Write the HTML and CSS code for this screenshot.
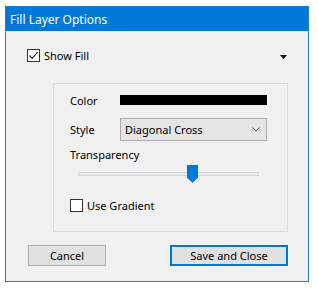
FILE: index.html
```html
<!DOCTYPE html>
<html>
<head>
<meta charset="utf-8">
<link rel="stylesheet" href="styles.css">
</head>
<body>
<div class="window">
  <div class="titlebar">Fill Layer Options</div>
  <div class="content">
    <div class="top-row">
      <label class="check">
        <span class="box checked">
          <svg width="11" height="11" viewBox="0 0 11 11"><path d="M1.5 5.5 L4.2 8.3 L9.6 2.2" fill="none" stroke="#222" stroke-width="1.2"/></svg>
        </span>
        <span>Show Fill</span>
      </label>
      <svg class="menu-arrow" width="7" height="4" viewBox="0 0 7 4"><path d="M0 0 H7 L3.5 4 Z" fill="#111"/></svg>
    </div>
    <div class="group">
      <div class="field">
        <span class="label">Color</span>
        <span class="color-bar"></span>
      </div>
      <div class="field style-row">
        <span class="label">Style</span>
        <div class="select">
          <span>Diagonal Cross</span>
          <svg width="8" height="5" viewBox="0 0 8 5"><path d="M0.5 0.5 L4 4 L7.5 0.5" fill="none" stroke="#555" stroke-width="1"/></svg>
        </div>
      </div>
      <div class="label trans-label">Transparency</div>
      <div class="slider">
        <div class="track"></div>
        <svg class="thumb" width="11" height="18" viewBox="0 0 11 18"><path d="M0 0 H11 V12.5 L5.5 18 L0 12.5 Z" fill="#0078d7"/></svg>
      </div>
      <label class="check gradient">
        <span class="box"></span>
        <span>Use Gradient</span>
      </label>
    </div>
    <div class="buttons">
      <button class="btn cancel">Cancel</button>
      <button class="btn primary">Save and Close</button>
    </div>
  </div>
</div>
</body>
</html>
```

FILE: styles.css
```css
* { box-sizing: border-box; }
body {
  margin: 0;
  background: #ffffff;
  font-family: "Noto Sans", "Open Sans", sans-serif;
  font-size: 11px;
  color: #000;
}
.window {
  margin: 6px 0 0 5px;
  width: 304px;
  height: 276px;
  border: 1px solid #1a7fd4;
  background: #f0f0f0;
  display: flex;
  flex-direction: column;
}
.titlebar {
  height: 24px;
  background: #0078d7;
  color: #fff;
  font-size: 12px;
  padding-left: 4px;
  display: flex;
  align-items: center;
}
.content {
  padding: 0 20px 0 21px;
}
.top-row {
  margin-top: 15px;
  height: 18px;
  display: flex;
  align-items: center;
  justify-content: space-between;
}
.menu-arrow { margin-right: 1px; margin-top: 4px; }
.check {
  display: flex;
  align-items: center;
  gap: 4px;
}
.box {
  width: 13px;
  height: 13px;
  border: 1px solid #333;
  background: #fff;
  display: flex;
  align-items: center;
  justify-content: center;
}
.group {
  margin: 19px 0 0 26px;
  width: 235px;
  height: 149px;
  border: 1px solid #dcdcdc;
  padding: 6px 0 0 16px;
}
.field {
  display: flex;
  align-items: center;
  height: 20px;
}
.label { width: 50px; }
.color-bar {
  width: 147px;
  height: 10px;
  background: #000;
}
.style-row { margin-top: 8px; height: 23px; }
.select {
  width: 147px;
  height: 23px;
  background: #e5e5e5;
  border: 1px solid #adadad;
  display: flex;
  align-items: center;
  justify-content: space-between;
  padding: 0 6px 0 4px;
}
.trans-label {
  width: auto;
  margin-top: 6px;
  height: 16px;
  line-height: 16px;
}
.slider {
  position: relative;
  height: 24px;
  margin-left: 8px;
  width: 181px;
}
.track {
  position: absolute;
  left: 0;
  right: 0;
  top: 9px;
  height: 4px;
  background: #e7eaea;
  border: 1px solid #d6d6d6;
}
.thumb {
  position: absolute;
  left: 109px;
  top: 2px;
}
.gradient {
  margin-top: 9px;
  height: 19px;
}
.buttons {
  margin: 13px 0 0 1px;
  display: flex;
  justify-content: space-between;
  width: 260px;
}
.btn {
  font-family: inherit;
  font-size: 11px;
  color: #000;
  height: 21px;
  background: #e1e1e1;
  border: 1px solid #adadad;
  padding: 0;
}
.cancel { width: 78px; }
.primary { width: 118px; border: 2px solid #0078d7; }
```
